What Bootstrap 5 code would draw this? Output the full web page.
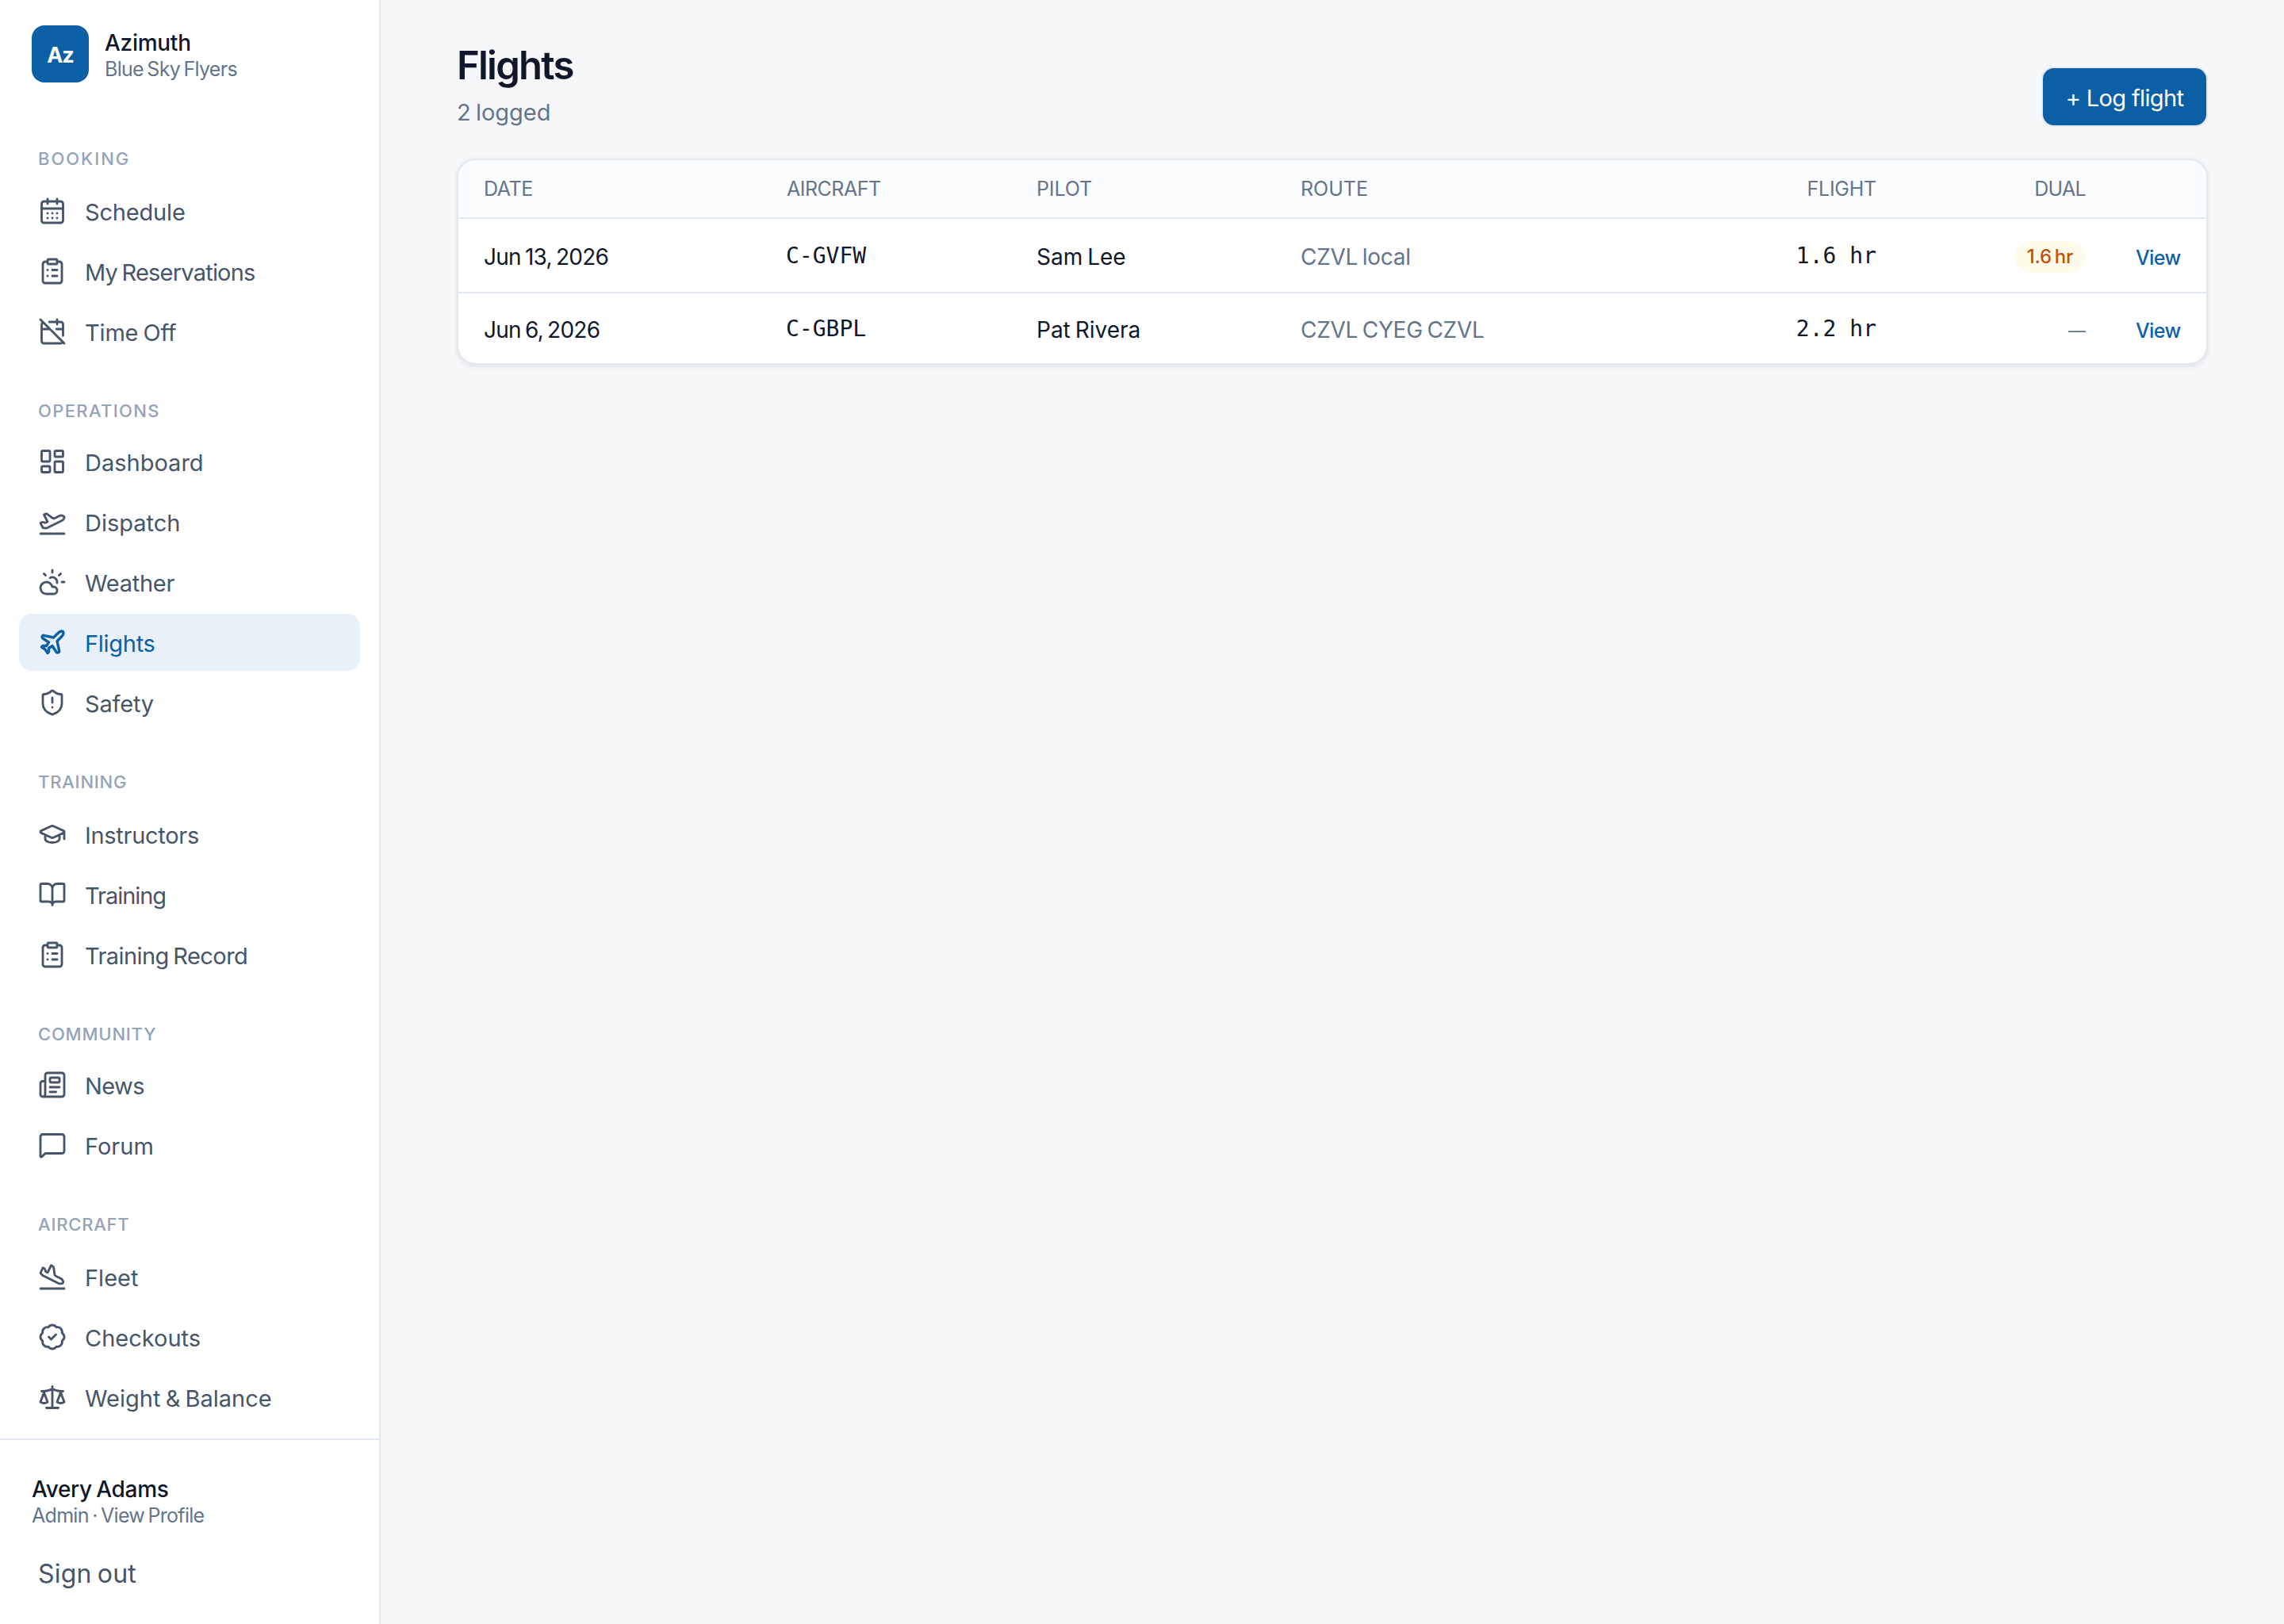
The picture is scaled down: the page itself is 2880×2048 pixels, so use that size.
<!DOCTYPE html>
<html lang="en">
<head>
<meta charset="utf-8">
<meta name="viewport" content="width=device-width, initial-scale=1">
<title>Flights · Azimuth</title>
<link href="https://cdn.jsdelivr.net/npm/bootstrap@5.3.0/dist/css/bootstrap.min.css" rel="stylesheet">
<style>
:root{--ink:#0f172a;--slate:#475569;--muted:#64748b;--faint:#94a3b8;--line:#e2e8f0;--brand:#0b5fa5}
body{font-family:Inter,"Noto Sans",sans-serif;background:#f6f7f9;color:var(--ink);word-spacing:-.07em;font-size:28px}
.sidebar{width:480px;background:#fff;border-right:2px solid var(--line)}
.brand-row{padding:32px 40px 0;height:182px}
.brand-mark{width:72px;height:72px;border-radius:16px;background:var(--brand);color:#fff;font-size:27px;font-weight:700;padding-top:4px;letter-spacing:-.04em}
.brand-text{padding:5px 0 0 20px}
.line-strong{font-size:28px;line-height:34px;font-weight:500}
.line-sub{font-size:25px;line-height:32px;color:var(--muted);letter-spacing:-.028em}
.menu-label{font-size:22px;line-height:36px;font-weight:550;color:var(--faint);text-transform:uppercase;padding-left:24px;margin-bottom:12px}
.menu{padding:0 24px}
.menu-section+.menu-section{margin-top:46px}
.menu-section:nth-child(even) .menu-label{margin-bottom:10px}
.menu .nav{gap:4px}
.menu .nav-link{height:72px;width:430px;padding:0 24px;gap:23px;border-radius:16px;color:var(--slate);font-size:29px;font-weight:420;line-height:36px}
.menu .nav-link span{padding-top:3px}
.menu .nav-link.active{background:#e8f0fa;color:var(--brand)}
.menu svg{width:36px;height:36px;flex:none;fill:none;stroke:currentColor;stroke-width:1.9;stroke-linecap:round;stroke-linejoin:round}
.menu .active svg{stroke-width:2.25}
.account{height:234px;border-top:2px solid var(--line);padding:45px 40px 0}
.signout{font-size:32px;line-height:40px;color:var(--slate);padding:38px 0 0 8px;letter-spacing:.006em}
.k-wide{letter-spacing:.09em}.k-open{letter-spacing:.062em}.k-mid{letter-spacing:.036em}
.k5{letter-spacing:-.006em}.k10{letter-spacing:-.01em}.k15{letter-spacing:-.015em}.k20{letter-spacing:-.02em}.k25{letter-spacing:-.027em}.k30{letter-spacing:-.036em}
.page{padding:53px 96px 0}
.page h1{font-size:49px;line-height:60px;font-weight:600;letter-spacing:-.036em}
.count{font-size:29px;line-height:34px;margin-top:12px;color:var(--muted)}
.btn-log{width:206px;height:72px;margin:0 2px 1px 0;padding:3px 0 0;border:0;border-radius:14px;background:var(--brand);color:#fff;font-size:29px;font-weight:430;letter-spacing:-.022em;box-shadow:0 0 0 2px var(--line)}
.flights-card{margin-top:41px;border:2px solid var(--line);border-radius:24px;overflow:hidden;background:#fff;box-shadow:0 2px 6px rgba(15,23,42,.1)}
.flights-card .table{table-layout:fixed;border-collapse:separate;border-spacing:0;--bs-table-bg:transparent;color:var(--ink)}
.flights-card th,.flights-card td{padding:3px 32px 0;border:0;border-bottom:2px solid var(--line);vertical-align:middle;line-height:34px;white-space:nowrap;box-shadow:none;color:var(--ink)}
.flights-card th{height:74px;padding:1px 32px 1px;background:#fbfcfe;color:var(--muted);font-size:25px;font-weight:430;text-transform:uppercase}
.flights-card td{height:94px}
.flights-card tr:last-child td{height:88px;border-bottom:0}
.flights-card td.tail-no{font-family:"DejaVu Sans Mono",monospace;padding-top:2px;padding-left:31px;word-spacing:0}
.flights-card td.soft{color:var(--muted)}
.flights-card td.none-yet{font-size:22px;padding-top:5px}
.dual-pill{display:inline-block;height:40px;line-height:40px;padding:0 16px;border-radius:20px;background:#fffbeb;color:#c2500a;font-size:24px;font-weight:450;letter-spacing:-.012em;vertical-align:middle}
.flights-card td.view-cell{padding-top:5px;padding-left:31px}
.view-link{color:var(--brand);text-decoration:none;font-size:25px;font-weight:450;letter-spacing:-.025em}
</style>
</head>
<body>
<div class="d-flex vh-100 overflow-hidden">
  <aside class="sidebar d-flex flex-column flex-shrink-0">
    <div class="brand-row d-flex align-items-start flex-shrink-0">
      <div class="brand-mark d-flex align-items-center justify-content-center">Az</div>
      <div class="brand-text">
        <div class="line-strong k10">Azimuth</div>
        <div class="line-sub">Blue Sky Flyers</div>
      </div>
    </div>
    <div class="menu flex-grow-1 overflow-hidden">
      <section class="menu-section">
        <div class="menu-label k-wide">Booking</div>
        <nav class="nav nav-pills flex-column">
          <a class="nav-link d-flex align-items-center"><svg viewBox="0 0 24 24"><path d="M8 2v4M16 2v4M3 10h18M8 14h.01M12 14h.01M16 14h.01M8 18h.01M12 18h.01M16 18h.01"/><rect width="18" height="18" x="3" y="4" rx="2"/></svg><span class="k5">Schedule</span></a>
          <a class="nav-link d-flex align-items-center"><svg viewBox="0 0 24 24"><rect width="8" height="4" x="8" y="2" rx="1"/><path d="M16 4h2a2 2 0 0 1 2 2v14a2 2 0 0 1-2 2H6a2 2 0 0 1-2-2V6a2 2 0 0 1 2-2h2M12 11h4M12 16h4M8 11h.01M8 16h.01"/></svg><span class="k25">My Reservations</span></a>
          <a class="nav-link d-flex align-items-center"><svg viewBox="0 0 24 24"><path d="M4.2 4.2A2 2 0 0 0 3 6v14a2 2 0 0 0 2 2h14a2 2 0 0 0 1.82-1.18M21 15.5V6a2 2 0 0 0-2-2H9.5M16 2v4M3 10h7M21 10h-5.5M2 2l20 20"/></svg><span class="k5">Time Off</span></a>
        </nav>
      </section>
      <section class="menu-section">
        <div class="menu-label k-open">Operations</div>
        <nav class="nav nav-pills flex-column">
          <a class="nav-link d-flex align-items-center"><svg viewBox="0 0 24 24"><rect width="7" height="9" x="3" y="3" rx="1"/><rect width="7" height="5" x="14" y="3" rx="1"/><rect width="7" height="9" x="14" y="12" rx="1"/><rect width="7" height="5" x="3" y="16" rx="1"/></svg><span>Dashboard</span></a>
          <a class="nav-link d-flex align-items-center"><svg viewBox="0 0 24 24"><path d="M2 22h20M6.36 17.4 4 17l-2-4 1.1-.55a2 2 0 0 1 1.8 0l.17.1a2 2 0 0 0 1.8 0L8 12 5 6l.9-.45a2 2 0 0 1 2.09.2l4.02 3a2 2 0 0 0 2.1.2l4.19-2.06a2.41 2.41 0 0 1 1.73-.17L21 7a1.4 1.4 0 0 1 .87 1.99l-.38.76c-.23.46-.6.84-1.07 1.08L7.58 17.2a2 2 0 0 1-1.22.18Z"/></svg><span>Dispatch</span></a>
          <a class="nav-link d-flex align-items-center"><svg viewBox="0 0 24 24"><path d="M12 2v2M4.93 4.93l1.41 1.41M20 12h2M19.07 4.93l-1.41 1.41M15.947 12.65a4 4 0 0 0-5.925-4.128M13 22H7a5 5 0 1 1 4.9-6H13a3 3 0 0 1 0 6Z"/></svg><span class="k10">Weather</span></a>
          <a class="nav-link active d-flex align-items-center"><svg viewBox="0 0 24 24"><path d="M17.8 19.2 16 11l3.5-3.5C21 6 21.5 4 21 3c-1-.5-3 0-4.5 1.5L13 8 4.8 6.2c-.5-.1-.9.1-1.1.5l-.3.5c-.2.5-.1 1 .3 1.3L9 12l-2 3H4l-1 1 3 2 2 3 1-1v-3l3-2 3.5 5.3c.3.4.8.5 1.3.3l.5-.2c.4-.3.6-.7.5-1.2z"/></svg><span class="k10">Flights</span></a>
          <a class="nav-link d-flex align-items-center"><svg viewBox="0 0 24 24"><path d="M20 13c0 5-3.5 7.5-7.66 8.95a1 1 0 0 1-.67-.01C7.5 20.5 4 18 4 13V6a1 1 0 0 1 1-1c2 0 4.5-1.2 6.24-2.72a1.17 1.17 0 0 1 1.52 0C14.51 3.81 17 5 19 5a1 1 0 0 1 1 1zM12 8v4M12 16h.01"/></svg><span class="k5">Safety</span></a>
        </nav>
      </section>
      <section class="menu-section">
        <div class="menu-label k-mid">Training</div>
        <nav class="nav nav-pills flex-column">
          <a class="nav-link d-flex align-items-center"><svg viewBox="0 0 24 24"><path d="M21.42 10.922a1 1 0 0 0-.019-1.838L12.83 5.18a2 2 0 0 0-1.66 0L2.6 9.08a1 1 0 0 0 0 1.832l8.57 3.908a2 2 0 0 0 1.66 0zM22 10v6M6 12.5V16a6 3 0 0 0 12 0v-3.5"/></svg><span class="k10">Instructors</span></a>
          <a class="nav-link d-flex align-items-center"><svg viewBox="0 0 24 24"><path d="M12 7v14M3 18a1 1 0 0 1-1-1V4a1 1 0 0 1 1-1h5a4 4 0 0 1 4 4 4 4 0 0 1 4-4h5a1 1 0 0 1 1 1v13a1 1 0 0 1-1 1h-6a3 3 0 0 0-3 3 3 3 0 0 0-3-3z"/></svg><span class="k30">Training</span></a>
          <a class="nav-link d-flex align-items-center"><svg viewBox="0 0 24 24"><rect width="8" height="4" x="8" y="2" rx="1"/><path d="M16 4h2a2 2 0 0 1 2 2v14a2 2 0 0 1-2 2H6a2 2 0 0 1-2-2V6a2 2 0 0 1 2-2h2M12 11h4M12 16h4M8 11h.01M8 16h.01"/></svg><span class="k20">Training Record</span></a>
        </nav>
      </section>
      <section class="menu-section">
        <div class="menu-label k-mid">Community</div>
        <nav class="nav nav-pills flex-column">
          <a class="nav-link d-flex align-items-center"><svg viewBox="0 0 24 24"><path d="M15 18h-5M18 14h-8M4 22h16a2 2 0 0 0 2-2V4a2 2 0 0 0-2-2H8a2 2 0 0 0-2 2v16a2 2 0 0 1-4 0v-9a2 2 0 0 1 2-2h2"/><rect width="8" height="4" x="10" y="6" rx="1"/></svg><span class="k20">News</span></a>
          <a class="nav-link d-flex align-items-center"><svg viewBox="0 0 24 24"><path d="M22 17a2 2 0 0 1-2 2H6.828a2 2 0 0 0-1.414.586l-2.202 2.202A.71.71 0 0 1 2 21.286V5a2 2 0 0 1 2-2h16a2 2 0 0 1 2 2z"/></svg><span>Forum</span></a>
        </nav>
      </section>
      <section class="menu-section">
        <div class="menu-label k-mid">Aircraft</div>
        <nav class="nav nav-pills flex-column">
          <a class="nav-link d-flex align-items-center"><svg viewBox="0 0 24 24"><path d="M2 22h20M3.77 10.77 2 9l2-4.5 1.1.55c.55.28.9.84.9 1.45s.35 1.17.9 1.45L8 8.5l3-6 1.05.53a2 2 0 0 1 1.09 1.52l.72 5.4a2 2 0 0 0 1.09 1.52l4.4 2.2c.42.22.78.55 1.01.96l.6 1.03c.49.88-.06 1.98-1.06 2.1l-1.18.15c-.47.06-.95-.02-1.37-.24L4.29 11.15a2 2 0 0 1-.52-.38Z"/></svg><span>Fleet</span></a>
          <a class="nav-link d-flex align-items-center"><svg viewBox="0 0 24 24"><path d="M3.85 8.62a4 4 0 0 1 4.78-4.77 4 4 0 0 1 6.74 0 4 4 0 0 1 4.78 4.78 4 4 0 0 1 0 6.74 4 4 0 0 1-4.77 4.78 4 4 0 0 1-6.75 0 4 4 0 0 1-4.78-4.77 4 4 0 0 1 0-6.76ZM9 12l2 2 4-4"/></svg><span>Checkouts</span></a>
          <a class="nav-link d-flex align-items-center"><svg viewBox="0 0 24 24"><path d="m16 16 3-8 3 8c-.87.65-1.92 1-3 1s-2.13-.35-3-1ZM2 16l3-8 3 8c-.87.65-1.92 1-3 1s-2.13-.35-3-1ZM7 21h10M12 3v18M3 7h2c2 0 5-1 7-2 2 1 5 2 7 2h2"/></svg><span>Weight &amp; Balance</span></a>
        </nav>
      </section>
    </div>
    <div class="account flex-shrink-0">
      <div class="line-strong k10">Avery Adams</div>
      <div class="line-sub">Admin · View Profile</div>
      <div class="signout">Sign out</div>
    </div>
  </aside>
  <main class="page flex-grow-1">
    <header class="d-flex align-items-end justify-content-between">
      <div>
        <h1 class="m-0">Flights</h1>
        <p class="count mb-0">2 logged</p>
      </div>
      <button type="button" class="btn btn-primary btn-log">+ Log flight</button>
    </header>
    <div class="flights-card">
      <table class="table mb-0">
        <colgroup><col style="width:382px"><col style="width:315px"><col style="width:333px"><col style="width:610px"><col style="width:180px"><col style="width:264px"><col style="width:120px"></colgroup>
        <thead>
          <tr><th class="k15">Date</th><th class="k20">Aircraft</th><th class="k5">Pilot</th><th>Route</th><th class="text-end k10">Flight</th><th class="text-end k25">Dual</th><th></th></tr>
        </thead>
        <tbody>
          <tr><td class="k25">Jun 13, 2026</td><td class="tail-no">C-GVFW</td><td>Sam Lee</td><td class="soft k10">CZVL local</td><td class="tail-no text-end">1.6 hr</td><td class="text-end"><span class="dual-pill">1.6 hr</span></td><td class="view-cell"><a class="view-link">View</a></td></tr>
          <tr><td class="k25">Jun 6, 2026</td><td class="tail-no">C-GBPL</td><td>Pat Rivera</td><td class="soft k10">CZVL CYEG CZVL</td><td class="tail-no text-end">2.2 hr</td><td class="text-end soft none-yet">—</td><td class="view-cell"><a class="view-link">View</a></td></tr>
        </tbody>
      </table>
    </div>
  </main>
</div>
<script src="https://cdn.jsdelivr.net/npm/bootstrap@5.3.0/dist/js/bootstrap.bundle.min.js"></script>
</body>
</html>
